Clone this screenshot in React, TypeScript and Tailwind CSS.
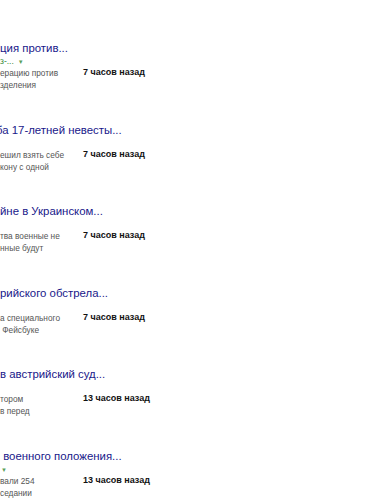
type NewsItem = {
  title: string;
  titleShift?: string;
  url?: string;
  arrow?: boolean;
  lines: string[];
  time: string;
};

const items: NewsItem[] = [
  { title: "ция против...", url: "з-...", arrow: true, lines: ["ерацию против", "зделения"], time: "7 часов назад" },
  { title: "ба 17-летней невесты...", titleShift: "-ml-[4px]", lines: ["ешил взять себе", "кону с одной"], time: "7 часов назад" },
  { title: "йне в Украинском...", lines: ["тва военные не", "нные будут"], time: "7 часов назад" },
  { title: "рийского обстрела...", lines: ["а специального", " Фейсбуке"], time: "7 часов назад" },
  { title: "в австрийский суд...", lines: ["тором", "в перед"], time: "13 часов назад" },
  { title: " военного положения...", url: "", arrow: true, lines: ["вали 254", "седании"], time: "13 часов назад" },
];

export default function App() {
  return (
    <div className="h-[500px] w-[378px] overflow-hidden bg-white pt-[40px] font-['Liberation_Sans',Arial,sans-serif]">
      <ul className="flex flex-col gap-[30.6px]">
        {items.map((it, i) => (
          <li key={i} className="flex flex-col">
            <p className={`whitespace-pre text-[11.4px] leading-[16px] text-[#18188a] ${it.titleShift ?? ""}`}>
              {it.title}
            </p>
            <p className="h-[11px] whitespace-pre text-[8.5px] leading-[11px] text-[#3a8a3a]">
              {it.url}
              {it.arrow && (
                <span className={`${it.url ? "ml-[4px]" : "ml-[1px]"} text-[6px] text-[#5aa05a]`}>▼</span>
              )}
            </p>
            <div className="flex">
              <div className="w-[83px] shrink-0 text-[8.3px] leading-[12px] text-[#555]">
                {it.lines.map((l, j) => (
                  <p key={j} className="whitespace-pre">
                    {l}
                  </p>
                ))}
              </div>
              <p className="-mt-[1px] text-[9px] font-bold leading-[12px] text-[#111]">{it.time}</p>
            </div>
          </li>
        ))}
      </ul>
    </div>
  );
}
